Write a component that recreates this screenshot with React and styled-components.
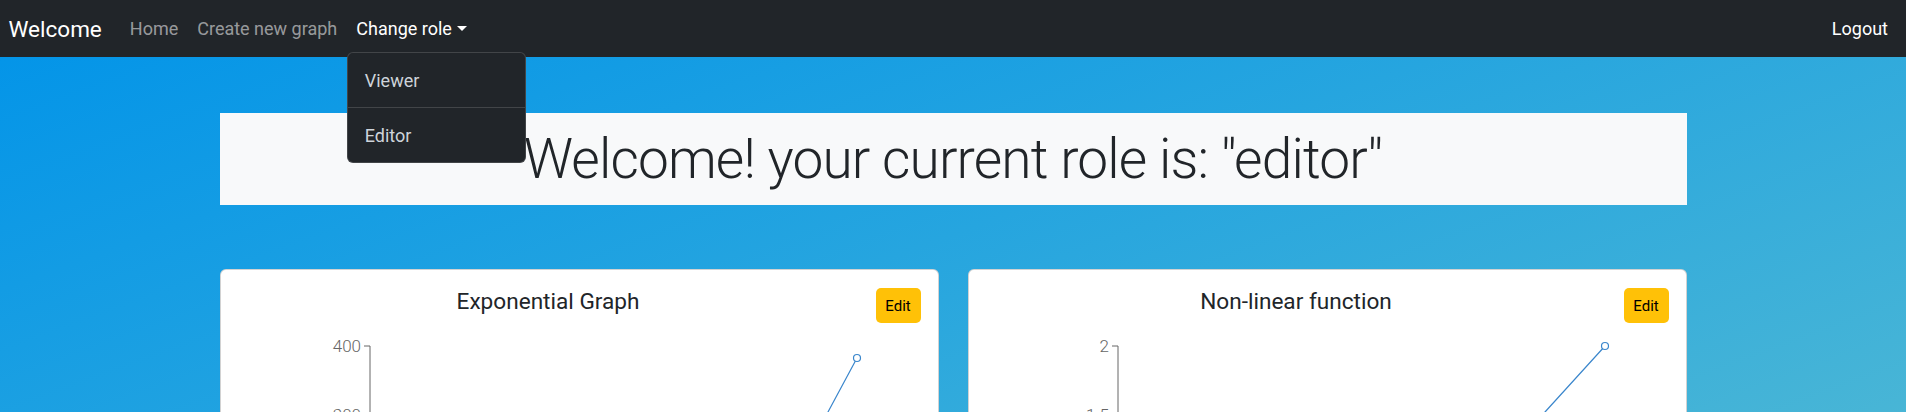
import React from "react";
import styled, { createGlobalStyle } from "styled-components";

const GlobalStyle = createGlobalStyle`
  html, body { margin: 0; padding: 0; }
  body { font-family: Roboto, "Noto Sans", "Liberation Sans", sans-serif; color: #212529; }
  * { box-sizing: border-box; }
`;

const Page = styled.div`
  min-height: 1270px;
  background-color: #0093e9;
  background-image: linear-gradient(160deg, #0093e9 0%, #80d0c7 100%);
`;

const Navbar = styled.nav`
  height: 57px;
  background: #212529;
  display: flex;
  align-items: center;
  padding: 0 8.5px 0 8.5px;
  position: relative;
  z-index: 10;
`;

const Brand = styled.a`
  font-size: 22.5px;
  color: #fff;
  margin-right: 18.5px;
  text-decoration: none;
  white-space: nowrap;
`;

const NavList = styled.ul`
  display: flex;
  align-items: stretch;
  align-self: stretch;
  list-style: none;
  margin: 0;
  padding: 0;
  flex: 1;
`;

const NavItem = styled.li`
  position: relative;
  display: flex;
  align-items: center;
  margin-left: ${(p) => (p.$push ? "auto" : "0")};
`;

const NavLink = styled.a`
  font-size: 18px;
  padding: 0 9.5px;
  color: ${(p) => (p.$active ? "#fff" : "rgba(255,255,255,0.55)")};
  text-decoration: none;
  white-space: nowrap;
  cursor: pointer;
`;

const Caret = styled.span`
  display: inline-block;
  margin-left: 5px;
  vertical-align: 0.2em;
  border-top: 0.3em solid #fff;
  border-left: 0.3em solid transparent;
  border-right: 0.3em solid transparent;
  border-bottom: 0;
`;

const Dropdown = styled.div`
  position: absolute;
  top: 52px;
  left: 0;
  width: 179px;
  background: #212529;
  border: 1px solid rgba(255, 255, 255, 0.15);
  border-radius: 6px;
  overflow: hidden;
`;

const DropItem = styled.a`
  display: flex;
  align-items: center;
  height: 54px;
  padding: 0 17px;
  font-size: 18px;
  color: #ced4da;
  text-decoration: none;
`;

const Divider = styled.hr`
  margin: 0;
  border: 0;
  border-top: 1px solid rgba(255, 255, 255, 0.15);
`;

const Container = styled.main`
  width: 1467px;
  margin: 0 auto;
  padding-top: 56px;
`;

const Jumbotron = styled.section`
  background: #f8f9fa;
  height: 92px;
`;

const Display = styled.h1`
  margin: 0;
  font-weight: 300;
  font-size: 55px;
  line-height: 92px;
  letter-spacing: -0.85px;
  text-align: center;
  color: #212529;
  white-space: nowrap;
`;

const CardGrid = styled.div`
  display: grid;
  grid-template-columns: 1fr 1fr;
  gap: 29px;
  margin-top: 64px;
`;

const Card = styled.article`
  background: #fff;
  border: 1px solid rgba(0, 0, 0, 0.175);
  border-radius: 6px;
  padding: 18px 17px 16px 16px;
`;

const CardHeader = styled.div`
  display: flex;
  align-items: flex-start;
  height: 35px;
`;

const CardTitle = styled.h5`
  flex: 1;
  margin: 1px 16px 0 0;
  font-size: 22.6px;
  font-weight: 400;
  line-height: 26px;
  text-align: center;
  color: #212529;
`;

const EditButton = styled.button`
  width: 45px;
  height: 35px;
  padding: 0;
  border: none;
  border-radius: 5px;
  background: #ffc107;
  color: #000;
  font-family: inherit;
  font-size: 15px;
  cursor: pointer;
`;

const ChartSvg = styled.svg`
  display: block;
  width: 100%;
  height: 300px;
`;

function Chart({ ticks, path, point }) {
  return (
    <ChartSvg viewBox="0 0 684 300" preserveAspectRatio="xMinYMin meet">
      <line x1="133" y1="23" x2="133" y2="300" stroke="#666" strokeWidth="1" />
      {ticks.map((t) => (
        <g key={t.label}>
          <line x1="127" y1={t.y} x2="133" y2={t.y} stroke="#666" strokeWidth="1" />
          <text
            x="124"
            y={t.y}
            dy="0.355em"
            textAnchor="end"
            fill="#666"
            fontSize="17"
            fontFamily="Roboto, sans-serif"
            fontWeight="300"
          >
            {t.label}
          </text>
        </g>
      ))}
      <path d={path} fill="none" stroke="#3a86cc" strokeWidth="1.2" />
      <circle cx={point[0]} cy={point[1]} r="3.5" fill="#fff" stroke="#3a86cc" strokeWidth="1.2" />
    </ChartSvg>
  );
}

const graphs = [
  {
    title: "Exponential Graph",
    ticks: [
      { label: "400", y: 23 },
      { label: "300", y: 92 },
      { label: "200", y: 161 },
      { label: "100", y: 230 },
    ],
    path: "M620 35 L591 89 Q560 150 520 190 Q470 235 400 260 L200 285",
    point: [620, 35],
  },
  {
    title: "Non-linear function",
    ticks: [
      { label: "2", y: 23 },
      { label: "1.5", y: 92 },
      { label: "1", y: 161 },
      { label: "0.5", y: 230 },
    ],
    path: "M620 23 L560 89 Q500 150 430 190 Q330 240 200 270",
    point: [620, 23],
  },
];

export default function App() {
  return (
    <>
      <GlobalStyle />
      <Page>
        <Navbar>
          <Brand href="#">Welcome</Brand>
          <NavList>
            <NavItem>
              <NavLink href="#">Home</NavLink>
            </NavItem>
            <NavItem>
              <NavLink href="#">Create new graph</NavLink>
            </NavItem>
            <NavItem>
              <NavLink $active>
                Change role
                <Caret />
              </NavLink>
              <Dropdown>
                <DropItem href="#">Viewer</DropItem>
                <Divider />
                <DropItem href="#">Editor</DropItem>
              </Dropdown>
            </NavItem>
            <NavItem $push>
              <NavLink href="#" $active>
                Logout
              </NavLink>
            </NavItem>
          </NavList>
        </Navbar>
        <Container>
          <Jumbotron>
            <Display>Welcome! your current role is: "editor"</Display>
          </Jumbotron>
          <CardGrid>
            {graphs.map((g) => (
              <Card key={g.title}>
                <CardHeader>
                  <CardTitle>{g.title}</CardTitle>
                  <EditButton>Edit</EditButton>
                </CardHeader>
                <Chart ticks={g.ticks} path={g.path} point={g.point} />
              </Card>
            ))}
          </CardGrid>
        </Container>
      </Page>
    </>
  );
}
